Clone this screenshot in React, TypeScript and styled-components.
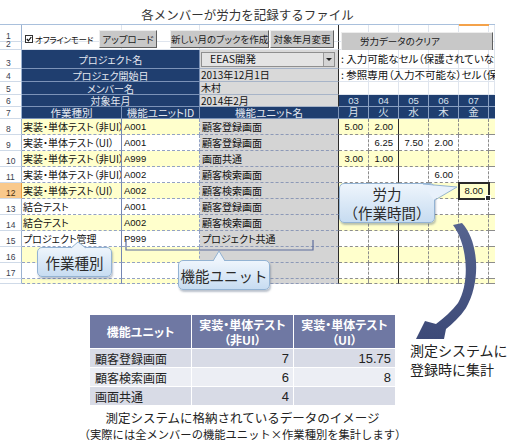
import styled, { createGlobalStyle, css } from "styled-components";

const JP = `"Noto Sans CJK JP", "Noto Sans", sans-serif`;
const NUM = `"Liberation Sans", Arial, sans-serif`;
const NAVY = "#1f3e6f";
const YELLOW = "#ffffcc";
const FAINT = "#dfe5ee";

const GlobalStyle = createGlobalStyle`
  html, body { margin: 0; padding: 0; background: #ffffff; }
  body { font-family: ${JP}; color: #222; }
  * { box-sizing: border-box; }
`;

type Place = { $c: number; $r: number; $cs?: number; $rs?: number };

const place = css<Place>`
  grid-column: ${(p) => p.$c} / span ${(p) => p.$cs ?? 1};
  grid-row: ${(p) => p.$r} / span ${(p) => p.$rs ?? 1};
  min-width: 0;
  min-height: 0;
`;

type Entry = { task: string; unit: string; name: string; hours: string[] };

const ENTRIES: Entry[] = [
  { task: "実装・単体テスト（非UI）", unit: "A001", name: "顧客登録画面", hours: ["5.00", "2.00", "", "", ""] },
  { task: "実装・単体テスト（UI）", unit: "A001", name: "顧客登録画面", hours: ["", "6.25", "7.50", "2.00", ""] },
  { task: "実装・単体テスト（非UI）", unit: "A999", name: "画面共通", hours: ["3.00", "1.00", "", "", ""] },
  { task: "実装・単体テスト（非UI）", unit: "A002", name: "顧客検索画面", hours: ["", "", "", "6.00", ""] },
  { task: "実装・単体テスト（UI）", unit: "A002", name: "顧客検索画面", hours: ["", "", "", "", "8.00"] },
  { task: "結合テスト", unit: "A001", name: "顧客登録画面", hours: ["", "", "", "", ""] },
  { task: "結合テスト", unit: "A002", name: "顧客検索画面", hours: ["", "", "", "", ""] },
  { task: "プロジェクト管理", unit: "P999", name: "プロジェクト共通", hours: ["", "", "", "", ""] },
  { task: "", unit: "", name: "", hours: ["", "", "", "", ""] },
  { task: "", unit: "", name: "", hours: ["", "", "", "", ""] },
  { task: "", unit: "", name: "", hours: ["", "", "", "", ""] },
];

const DAYS = [
  { no: "03", wd: "月" },
  { no: "04", wd: "火" },
  { no: "05", wd: "水" },
  { no: "06", wd: "木" },
  { no: "07", wd: "金" },
];

const SUMMARY = [
  { unit: "顧客登録画面", nonUi: "7", ui: "15.75" },
  { unit: "顧客検索画面", nonUi: "6", ui: "8" },
  { unit: "画面共通", nonUi: "4", ui: "" },
];

const SELECTED = { row: 4, day: 4 };

const App = () => {
  const rowLabels = Array.from({ length: 18 }, (_, i) => (i < 17 ? String(i + 1) : ""));

  return (
    <Page>
      <GlobalStyle />
      <Title>各メンバーが労力を記録するファイル</Title>

      <Sheet>
        {rowLabels.map((label, i) => (
          <RowHead key={`rh${i}`} $c={1} $r={i + 1} $active={label === "12"}>
            {label}
          </RowHead>
        ))}

        {[1, 2].map((r) =>
          [2, 3, 4].map((c) => <BlankCell key={`b${r}-${c}`} $c={c} $r={r} $edge={c === 4} />)
        )}
        {[1, 2, 3, 4, 5].map((r) =>
          [5, 6, 7, 8, 9, 10].map((c) => <BlankCell key={`g${r}-${c}`} $c={c} $r={r} />)
        )}

        <Toolbar $c={2} $r={1} $cs={3} $rs={2}>
          <OfflineCheck>
            <CheckBox>
              <svg width="6" height="6" viewBox="0 0 6 6">
                <polyline points="0.8,3 2.4,4.8 5.3,1" fill="none" stroke="#111" strokeWidth="1.2" />
              </svg>
            </CheckBox>
            オフラインモード
          </OfflineCheck>
          <ToolButton $w={58}>アップロード</ToolButton>
          <ToolButton $w={99} $ml={13}>新しい月のブックを作成</ToolButton>
          <ToolButton $w={64} $ml={1}>対象年月変更</ToolButton>
        </Toolbar>
        <ColumnMark $c={9} $r={1} />
        <ClearArea $c={5} $r={1} $cs={6} $rs={2}>
          <ClearButton $w={152}>労力データのクリア</ClearButton>
        </ClearArea>

        <NavyCell $c={2} $r={3} $cs={2}>プロジェクト名</NavyCell>
        <ValueCell $c={4} $r={3}>
          <Select>
            <SelectText>EEAS開発</SelectText>
            <SelectArrow />
          </Select>
        </ValueCell>
        <NoteCell $c={5} $r={3} $cs={6}>: 入力可能なセル（保護されていないセル）</NoteCell>

        <NavyCell $c={2} $r={4} $cs={2}>プロジェク開始日</NavyCell>
        <ValueCell $c={4} $r={4}>2013年12月1日</ValueCell>
        <NoteCell $c={5} $r={4} $cs={6}>: 参照専用（入力不可能な）セル（保護されたセル）</NoteCell>

        <NavyCell $c={2} $r={5} $cs={2}>メンバー名</NavyCell>
        <ValueCell $c={4} $r={5}>木村</ValueCell>

        <NavyCell $c={2} $r={6} $cs={2}>対象年月</NavyCell>
        <ValueCell $c={4} $r={6}>2014年2月</ValueCell>

        {DAYS.map((d, i) => (
          <DayHead key={`dn${i}`} $c={5 + i} $r={6} $small>
            {d.no}
          </DayHead>
        ))}
        <DayHead $c={10} $r={6} $last />
        <NavyCell $c={2} $r={7} $size={10.5}>作業種別</NavyCell>
        <NavyCell $c={3} $r={7} $size={10.5}>機能ユニットID</NavyCell>
        <NavyCell $c={4} $r={7} $size={10.5}>機能ユニット名</NavyCell>
        {DAYS.map((d, i) => (
          <DayHead key={`dw${i}`} $c={5 + i} $r={7}>
            {d.wd}
          </DayHead>
        ))}
        <DayHead $c={10} $r={7} $last />

        {ENTRIES.map((e, i) => {
          const r = 8 + i;
          const even = i % 2 === 0;
          return [
            <TaskCell key={`t${i}`} $c={2} $r={r} $even={even}>{e.task}</TaskCell>,
            <UnitIdCell key={`u${i}`} $c={3} $r={r} $even={even}>{e.unit}</UnitIdCell>,
            <UnitNameCell key={`n${i}`} $c={4} $r={r}>{e.name}</UnitNameCell>,
            ...e.hours.map((h, d) => (
              <HourCell
                key={`h${i}-${d}`}
                $c={5 + d}
                $r={r}
                $even={even}
                $solid={d === 1}
                $selected={i === SELECTED.row && d === SELECTED.day}
              >
                {h}
              </HourCell>
            )),
            <HourCell key={`x${i}`} $c={10} $r={r} $even={even} $last />,
          ];
        })}

        <Callout $x={37} $y={222} $w={75} $h={30}>
          <Tail>
            <polygon points="34,1.6 41,-5 49,1.6" fill="#edf4fc" />
            <polyline points="34,1 41,-5 49,1" fill="none" stroke="#93b3d3" />
          </Tail>
          作業種別
        </Callout>
        <Callout $x={178} $y={235} $w={92} $h={30}>
          <Tail>
            <polygon points="35,1.6 41,-9 47,1.6" fill="#edf4fc" />
            <polyline points="35,1 41,-9 47,1" fill="none" stroke="#93b3d3" />
          </Tail>
          機能ユニット
        </Callout>
        <Callout $x={339} $y={158} $w={96} $h={40}>
          <Tail>
            <polygon points="84,1.6 118,4 94.6,17" fill="#e8f1fb" />
            <polyline points="84,1 118,4 96,17" fill="none" stroke="#93b3d3" />
          </Tail>
          <span>労力</span>
          <span>（作業時間）</span>
        </Callout>
      </Sheet>

      <Summary>
        <SummaryColumn>
          <Table>
            <thead>
              <tr>
                <Th>機能ユニット</Th>
                <Th>
                  実装・単体テスト
                  <br />
                  （非UI）
                </Th>
                <Th>
                  実装・単体テスト
                  <br />
                  （UI）
                </Th>
              </tr>
            </thead>
            <tbody>
              {SUMMARY.map((s, i) => (
                <tr key={s.unit}>
                  <Td $shade={i % 2 === 0}>{s.unit}</Td>
                  <Td $shade={i % 2 === 0} $num>{s.nonUi}</Td>
                  <Td $shade={i % 2 === 0} $num>{s.ui}</Td>
                </tr>
              ))}
            </tbody>
          </Table>
          <CaptionMain>測定システムに格納されているデータのイメージ</CaptionMain>
          <CaptionSub>（実際には全メンバーの機能ユニット×作業種別を集計します）</CaptionSub>
        </SummaryColumn>
        <SideNote>
          測定システムに
          <br />
          登録時に集計
        </SideNote>
      </Summary>

      <Overlay viewBox="0 0 521 445">
        <defs>
          <linearGradient id="arrowFill" x1="0" y1="0" x2="0" y2="1">
            <stop offset="0" stopColor="#56648f" />
            <stop offset="1" stopColor="#3d4a78" />
          </linearGradient>
        </defs>
        <polyline points="126,240 126,250 313,250 313,240" fill="none" stroke="#5d6c9c" strokeWidth="1.2" />
        <path
          d="M453 225 L462 223 C478 240 482 280 466 308 C460 317 452 324 446 329 L444 339 L416 339 L425 321 L436 324 C444 318 452 311 458 303 C470 283 468 245 453 225 Z"
          fill="url(#arrowFill)"
        />
      </Overlay>
    </Page>
  );
};

export default App;

const Page = styled.div`
  position: relative;
  width: 521px;
  height: 445px;
  overflow: hidden;
`;

const Title = styled.h1`
  margin: 0;
  width: 495px;
  height: 24px;
  padding-top: 5px;
  font-size: 12.5px;
  line-height: 19px;
  font-weight: 400;
  text-align: center;
  color: #333;
`;

const Sheet = styled.div`
  position: relative;
  width: 495px;
  display: grid;
  grid-template-columns: 22px 100px 78px 139px repeat(5, 30px) 6px;
  grid-template-rows: 17px 8px 19px 13px 13px 12px 12px repeat(10, 16px) 5px;
  border-top: 1px solid #a9c0dc;
  font-feature-settings: "palt";
`;

const RowHead = styled.div<Place & { $active?: boolean }>`
  ${place};
  display: flex;
  align-items: flex-end;
  padding: 0 0 1px 6px;
  font-family: ${NUM};
  font-size: 8.5px;
  line-height: 7px;
  color: ${(p) => (p.$active ? "#4a3010" : "#3a4150")};
  background: ${(p) => (p.$active ? "#f9c98c" : "#ffffff")};
  border-right: 1px solid ${(p) => (p.$active ? "#e89a40" : "#9cb3d1")};
  border-bottom: 1px solid #cfdae8;
`;

const BlankCell = styled.div<Place & { $edge?: boolean }>`
  ${place};
  border-right: 1px solid ${(p) => (p.$edge ? "#2b2b2b" : FAINT)};
  border-bottom: 1px solid ${FAINT};
`;

const Toolbar = styled.div<Place>`
  ${place};
  display: flex;
  align-items: center;
  padding: 2px 0 0 3px;
`;

const OfflineCheck = styled.label`
  display: flex;
  align-items: center;
  gap: 2px;
  width: 74px;
  font-size: 8.5px;
  letter-spacing: -0.3px;
  color: #111;
  white-space: nowrap;
`;

const CheckBox = styled.span`
  display: inline-flex;
  align-items: center;
  justify-content: center;
  width: 8px;
  height: 8px;
  border: 1px solid #333;
  background: #fff;
`;

const ToolButton = styled.button<{ $w: number; $ml?: number }>`
  flex: none;
  width: ${(p) => p.$w}px;
  height: 18px;
  margin-left: ${(p) => p.$ml ?? 0}px;
  padding: 0;
  font-family: ${JP};
  font-feature-settings: "palt";
  font-size: 9.5px;
  color: #1a1a1a;
  background: #c8c8c8;
  border: 1px solid;
  border-color: #ededed #5f5f5f #5f5f5f #ededed;
  white-space: nowrap;
  overflow: hidden;
`;

const ClearArea = styled.div<Place>`
  ${place};
  overflow: hidden;
  padding: 1px 0 0 2px;
`;

const ClearButton = styled(ToolButton)`
  height: 19px;
  text-align: left;
  padding-left: 18px;
`;

const ColumnMark = styled.div<Place>`
  ${place};
  align-self: start;
  height: 2px;
  margin-top: -1px;
  background: #f4a24a;
  z-index: 1;
`;

const NavyCell = styled.div<Place & { $size?: number }>`
  ${place};
  display: flex;
  align-items: center;
  justify-content: center;
  padding-top: 1px;
  background: ${NAVY};
  color: #e4e8f0;
  font-size: ${(p) => p.$size ?? 10}px;
  line-height: 1;
  border-right: 1px solid #7c93b8;
  border-bottom: 1px solid #7c93b8;
  white-space: nowrap;
`;

const ValueCell = styled.div<Place>`
  ${place};
  display: flex;
  align-items: center;
  padding-left: 1px;
  background: #d9d9d9;
  border-right: 1px solid #2b2b2b;
  border-bottom: 1px solid #a7b4c8;
  font-size: 10px;
  line-height: 1;
  color: #111;
  white-space: nowrap;
`;

const Select = styled.div`
  flex: 1;
  display: flex;
  align-items: center;
  height: 15px;
  margin-right: 3px;
  border: 1px solid #8f8f8f;
  background: #e4e4e4;
  font-size: 10.5px;
`;

const SelectText = styled.span`
  flex: 1;
  padding-left: 8px;
`;

const SelectArrow = styled.span`
  display: flex;
  align-items: center;
  justify-content: center;
  width: 11px;
  height: 100%;
  border-left: 1px solid #9a9a9a;
  background: #d4d4d4;

  &::after {
    content: "";
    border-left: 3px solid transparent;
    border-right: 3px solid transparent;
    border-top: 3px solid #222;
  }
`;

const NoteCell = styled.div<Place>`
  ${place};
  display: flex;
  align-items: center;
  padding-left: 2px;
  font-size: 10.5px;
  line-height: 1;
  color: #111;
  white-space: nowrap;
  overflow: hidden;
`;

const DayHead = styled.div<Place & { $small?: boolean; $last?: boolean }>`
  ${place};
  display: flex;
  align-items: center;
  justify-content: center;
  background: ${NAVY};
  color: #dce3ee;
  font-family: ${(p) => (p.$small ? NUM : JP)};
  font-size: ${(p) => (p.$small ? 9.5 : 10.5)}px;
  line-height: 1;
  border-right: ${(p) => (p.$last ? "none" : "1px solid #8aa0c2")};
  border-bottom: 1px solid #8aa0c2;
`;

const dataCell = css<{ $even: boolean }>`
  display: flex;
  align-items: center;
  background: ${(p) => (p.$even ? YELLOW : "#ffffff")};
  border-bottom: 1px dashed #93a2c4;
  color: #111;
  white-space: nowrap;
  overflow: hidden;
  line-height: 1;
`;

const TaskCell = styled.div<Place & { $even: boolean }>`
  ${place};
  ${dataCell};
  padding-left: 1px;
  font-size: 10px;
  border-right: 1px solid #7486b3;
`;

const UnitIdCell = styled.div<Place & { $even: boolean }>`
  ${place};
  ${dataCell};
  padding-left: 2px;
  font-family: ${NUM};
  font-size: 9.5px;
  border-right: 1px dashed #93a2c4;
`;

const UnitNameCell = styled.div<Place>`
  ${place};
  display: flex;
  align-items: center;
  padding-left: 2px;
  background: #d4d4d4;
  border-right: 1px solid #2b2b2b;
  border-bottom: 1px dashed #8d99b7;
  font-size: 10px;
  line-height: 1;
  color: #111;
  white-space: nowrap;
  overflow: hidden;
`;

const HourCell = styled.div<
  Place & { $even: boolean; $solid?: boolean; $last?: boolean; $selected?: boolean }
>`
  ${place};
  position: relative;
  display: flex;
  align-items: center;
  justify-content: flex-end;
  padding-right: 5px;
  background: ${(p) => (p.$even ? YELLOW : "#ffffff")};
  border-right: ${(p) => (p.$last ? "none" : p.$solid ? "1px solid #2b2b2b" : "1px dashed #8c8c8c")};
  border-bottom: 1px dashed #8c8c8c;
  font-family: ${NUM};
  font-size: 9.5px;
  line-height: 1;
  color: #111;

  ${(p) =>
    p.$selected &&
    css`
      outline: 2px solid #2a2a2a;
      outline-offset: -1px;
      z-index: 1;

      &::after {
        content: "";
        position: absolute;
        right: -3px;
        bottom: -3px;
        width: 4px;
        height: 4px;
        background: #2a2a2a;
        border: 1px solid #fff;
      }
    `}
`;

const Callout = styled.div<{ $x: number; $y: number; $w: number; $h: number }>`
  position: absolute;
  left: ${(p) => p.$x}px;
  top: ${(p) => p.$y}px;
  width: ${(p) => p.$w}px;
  height: ${(p) => p.$h}px;
  z-index: 3;
  display: flex;
  flex-direction: column;
  align-items: center;
  justify-content: center;
  border: 1px solid #93b3d3;
  border-radius: 5px;
  background: linear-gradient(#eef5fc, #c7dcf1);
  box-shadow: 1px 2px 2px rgba(60, 80, 110, 0.35);
  font-size: 14.5px;
  line-height: 19px;
  color: #2a2a2a;
  font-feature-settings: normal;
  white-space: nowrap;
`;

const Tail = styled.svg`
  position: absolute;
  left: -1px;
  top: -1px;
  width: 1px;
  height: 1px;
  overflow: visible;
`;

const Summary = styled.div`
  display: flex;
  align-items: flex-start;
  margin-top: 30px;
  padding-left: 89px;
`;

const SummaryColumn = styled.div`
  display: flex;
  flex-direction: column;
  align-items: center;
  width: 307px;
`;

const Table = styled.table`
  width: 307px;
  border-collapse: collapse;
  table-layout: fixed;
  font-feature-settings: "palt";
`;

const Th = styled.th`
  height: 34px;
  padding: 0;
  background: #6f78a3;
  border: 1px solid #ffffff;
  color: #ffffff;
  font-size: 12px;
  font-weight: 700;
  line-height: 15px;
  text-align: center;
`;

const Td = styled.td<{ $shade: boolean; $num?: boolean }>`
  height: 19px;
  padding: 0 ${(p) => (p.$num ? "4px" : "0")} 0 ${(p) => (p.$num ? "0" : "5px")};
  background: ${(p) => (p.$shade ? "#d8dbe6" : "#eceef4")};
  border: 1px solid #ffffff;
  color: #222;
  font-family: ${(p) => (p.$num ? `"Liberation Sans Narrow", ${NUM}` : JP)};
  font-size: ${(p) => (p.$num ? 13 : 12)}px;
  line-height: 17px;
  text-align: ${(p) => (p.$num ? "right" : "left")};
  white-space: nowrap;
`;

const CaptionMain = styled.div`
  margin-top: 4px;
  font-size: 12.5px;
  line-height: 16px;
  color: #222;
  white-space: nowrap;
`;

const CaptionSub = styled.div`
  font-size: 11.3px;
  line-height: 17px;
  color: #222;
  white-space: nowrap;
`;

const SideNote = styled.div`
  margin: 27px 0 0 14px;
  font-size: 14px;
  line-height: 19px;
  color: #222;
  white-space: nowrap;
`;

const Overlay = styled.svg`
  position: absolute;
  left: 0;
  top: 0;
  width: 521px;
  height: 445px;
  pointer-events: none;
  z-index: 2;
`;
